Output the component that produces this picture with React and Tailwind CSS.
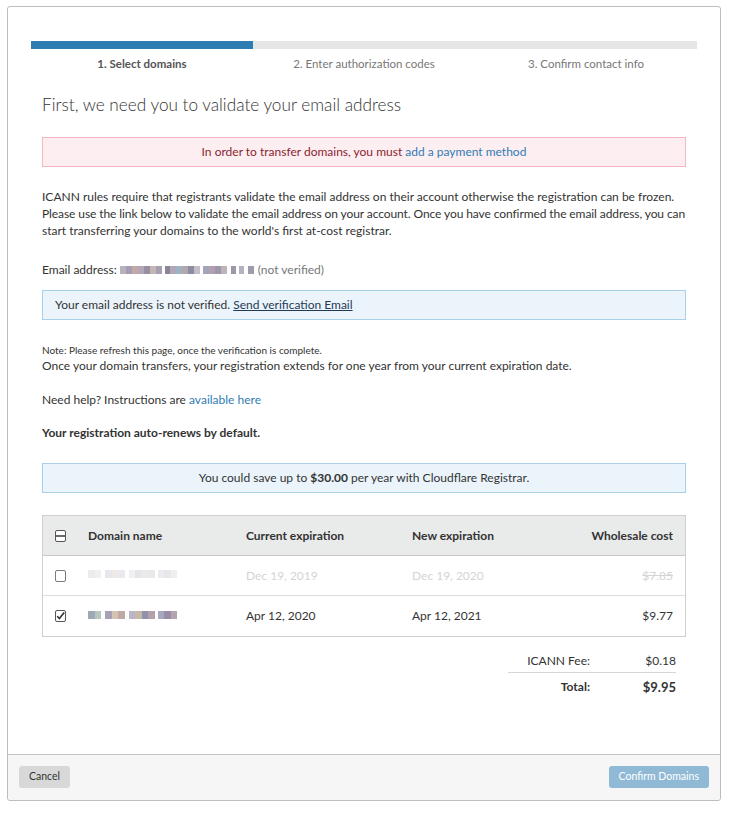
import React from "react";

const font = { fontFamily: "Lato, 'Open Sans', sans-serif" };

// pixelated blur blocks used for the hidden email / domain names
const Blur = ({ cells, h = "h-[8px]" }) => (
  <span className="inline-flex items-center align-middle">
    {cells.map((c, i) => (
      <span
        key={i}
        className={`${h} inline-block`}
        style={{ width: c[0], backgroundColor: c[1], marginLeft: c[2] || 0 }}
      />
    ))}
  </span>
);

const emailCells = [
  [6, "#b9b0c0"], [6, "#a59db1"], [6, "#c2a8a6"], [6, "#b1a7b6"], [6, "#998fa2"], [6, "#c3b6b4"], [6, "#a6a1ae"],
  [5, "#8d8596", 3], [6, "#b0a8b8"], [6, "#9fb3c5"], [6, "#b5a7ae"], [6, "#8c8da0"], [6, "#c4bcc6"],
  [6, "#a3a6b8", 3], [6, "#b29fb0"], [6, "#9b98ab"], [6, "#c0b3b8"],
  [5, "#9c98a8", 4], [5, "#b6b2c0", 3], [6, "#9e9bab", 4],
];

const domainDim = [
  [7, "#ececec"], [6, "#f1f1f1"], [7, "#e8e8ec", 4], [6, "#efeae8"], [7, "#e9e9ee"], [6, "#f0f0f0", 4],
  [7, "#e6e6ea"], [6, "#eeeaea"], [7, "#e9e9ec"], [6, "#ececf0", 3], [7, "#e8e6ea"], [6, "#efefef"],
];

const domainLive = [
  [7, "#9ea9b8"], [6, "#b8c6c0"], [7, "#a8a0b6", 4], [6, "#d5c2b5"], [7, "#c1a9a4"], [6, "#bbb6c5", 4],
  [7, "#c7b8a8"], [6, "#8f92ab"], [7, "#b6a0a8"], [6, "#a5a8bf", 3], [7, "#9b8da8"], [6, "#b3a6b0"],
];

const Box = ({ kind, dim }) => (
  <svg width="11" height="12" viewBox="0 0 11 12" className="block">
    <rect x="0.5" y="0.5" width="10" height="11" rx="1.5" fill="#fff" stroke={dim ? "#7a7a7a" : "#555"} />
    {kind === "minus" && <line x1="1" y1="6" x2="10" y2="6" stroke="#444" strokeWidth="1.6" />}
    {kind === "check" && (
      <path d="M2.2 6.2 L4.4 8.6 L9.2 2.6" fill="none" stroke="#333" strokeWidth="1.6" />
    )}
  </svg>
);

export default function App() {
  return (
    <div className="min-h-[813px] bg-white pl-[7px] pr-[10px] pt-[6px] text-[#333]" style={font}>
      <div className="border border-[#bdbdbd] rounded-[3px] bg-white">
        {/* ── Body ── */}
        <div className="px-[23px] pt-[34px] pb-[58px]">
          {/* progress */}
          <div className="flex h-[8px] bg-[#e6e6e6]">
            <div className="w-1/3 bg-[#2d7db3]" />
          </div>
          <div className="grid grid-cols-3 mt-[7px] text-[11.5px] leading-[16px] text-center">
            <p className="font-bold text-[#555]">1. Select domains</p>
            <p className="text-[#777]">2. Enter authorization codes</p>
            <p className="text-[#777]">3. Confirm contact info</p>
          </div>

          <div className="px-[11px]">
            <h1 className="mt-[21px] text-[17.2px] leading-[24px] font-light text-[#333]">
              First, we need you to validate your email address
            </h1>

            <div className="mt-[20px] h-[30px] flex items-center justify-center border border-[#f2b8c2] bg-[#fdeef1] text-[12px] text-[#8a1f30]">
              In order to transfer domains, you must&nbsp;
              <a className="text-[#2f7cb5]">add a payment method</a>
            </div>

            <div className="mt-[21px] text-[12px] leading-[17px] whitespace-nowrap">
              <p>ICANN rules require that registrants validate the email address on their account otherwise the registration can be frozen.</p>
              <p className="tracking-[-0.09px]">Please use the link below to validate the email address on your account. Once you have confirmed the email address, you can</p>
              <p>start transferring your domains to the world's first at-cost registrar.</p>
            </div>

            <p className="mt-[22px] text-[12px] leading-[17px] flex items-center">
              Email address:&nbsp;
              <Blur cells={emailCells} />
              <span className="ml-[4px] text-[#777]">(not verified)</span>
            </p>

            <div className="mt-[12px] h-[30px] flex items-center px-[12px] border border-[#a9d0ea] bg-[#ebf4fb] text-[12px]">
              Your email address is not verified.&nbsp;
              <a className="underline text-[#1f3b57]">Send verification Email</a>
            </div>

            <p className="mt-[23px] text-[10px] leading-[14px]">
              Note: Please refresh this page, once the verification is complete.
            </p>
            <p className="text-[12px] leading-[17px]">
              Once your domain transfers, your registration extends for one year from your current expiration date.
            </p>

            <p className="mt-[17px] text-[12px] leading-[17px]">
              Need help? Instructions are <a className="text-[#2f7cb5]">available here</a>
            </p>

            <p className="mt-[16px] text-[12px] leading-[17px] font-bold">
              Your registration auto-renews by default.
            </p>

            <div className="mt-[22px] h-[30px] flex items-center justify-center border border-[#a9d0ea] bg-[#ebf4fb] text-[12px]">
              You could save up to&nbsp;<b>$30.00</b>&nbsp;per year with Cloudflare Registrar.
            </div>

            {/* ── Table ── */}
            <div className="mt-[22px] border border-[#cfcfcf] text-[12px]">
              <div className="h-[40px] grid grid-cols-[33px_158px_166px_1fr_auto] items-center px-[12px] bg-[#e9eaea] border-b border-[#c8c8c8] font-bold text-[#333]">
                <Box kind="minus" />
                <span>Domain name</span>
                <span>Current expiration</span>
                <span>New expiration</span>
                <span>Wholesale cost</span>
              </div>
              <div className="h-[40px] grid grid-cols-[33px_158px_166px_1fr_auto] items-center px-[12px] border-b border-[#dcdcdc] text-[#d4d4d4]">
                <Box dim />
                <span className="-mt-[4px]"><Blur cells={domainDim} /></span>
                <span>Dec 19, 2019</span>
                <span>Dec 19, 2020</span>
                <span className="line-through">$7.85</span>
              </div>
              <div className="h-[40px] grid grid-cols-[33px_158px_166px_1fr_auto] items-center px-[12px] text-[#333]">
                <Box kind="check" />
                <span className="-mt-[4px]"><Blur cells={domainLive} /></span>
                <span>Apr 12, 2020</span>
                <span>Apr 12, 2021</span>
                <span>$9.77</span>
              </div>
            </div>

            {/* ── Summary ── */}
            <div className="flex justify-end mr-[10px] mt-[15px] text-[12px]">
              <div className="w-[168px]">
                <div className="grid grid-cols-[82px_1fr] leading-[17px] pb-[3px] border-b border-[#d6d6d6]">
                  <span className="text-right">ICANN Fee:</span>
                  <span className="text-right">$0.18</span>
                </div>
                <div className="grid grid-cols-[82px_1fr] leading-[18px] pt-[5px] font-bold">
                  <span className="text-right">Total:</span>
                  <span className="text-right text-[13px]">$9.95</span>
                </div>
              </div>
            </div>
          </div>
        </div>

        {/* ── Footer ── */}
        <div className="flex items-center justify-between px-[11px] pt-[11px] pb-[12px] bg-[#f6f6f6] border-t border-[#c4c4c4] rounded-b-[3px]">
          <button className="h-[22px] px-[10px] rounded-[3px] bg-[#d8d8d8] text-[10.5px] text-[#333]">
            Cancel
          </button>
          <button className="h-[22px] px-[10px] rounded-[3px] bg-[#90b9d6] text-[10.5px] text-white">
            Confirm Domains
          </button>
        </div>
      </div>
    </div>
  );
}
